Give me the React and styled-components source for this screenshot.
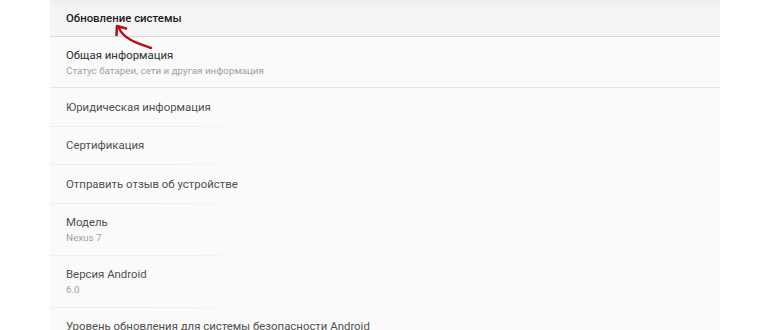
import React from 'react';
import styled, { createGlobalStyle } from 'styled-components';

const GlobalStyle = createGlobalStyle`
  html, body {
    margin: 0;
    padding: 0;
    background: #ffffff;
    font-family: Roboto, "Noto Sans", "Liberation Sans", sans-serif;
  }
`;

const Page = styled.div`
  width: 770px;
  height: 330px;
  overflow: hidden;
  padding-left: 50px;
  box-sizing: border-box;
`;

const Panel = styled.div`
  position: relative;
  width: 670px;
  background: #fafafa;
  display: flex;
  flex-direction: column;
`;

const TopBar = styled.div`
  height: 36px;
  display: flex;
  align-items: center;
  padding-left: 16px;
  background: linear-gradient(#eeeeee, #f4f4f4 30%, #f5f5f5);
  border-bottom: 1px solid #d6d6d6;
  font-size: 11.4px;
  font-weight: 500;
  color: #1c1c1c;
`;

const Row = styled.div`
  height: ${p => (p.$h ? p.$h : p.$sub ? 52 : 38.5)}px;
  display: flex;
  flex-direction: column;
  justify-content: ${p => (p.$sub ? 'flex-start' : 'center')};
  padding-top: ${p => (p.$sub ? 11 : 0)}px;
  padding-left: 16px;
  box-sizing: border-box;
  border-bottom: ${p => (p.$strong ? '1px solid #e4e4e4' : 'none')};
  position: relative;

  ${p => !p.$strong && !p.$last && `
    &::after {
      content: '';
      position: absolute;
      left: 0;
      bottom: 0;
      width: 200px;
      height: 1px;
      background: linear-gradient(90deg, #ededed, #efefef 70%, rgba(239,239,239,0));
    }
  `}
`;

const Title = styled.div`
  font-size: 11.4px;
  line-height: 15px;
  color: ${p => (p.$dark ? '#2e2e2e' : '#505050')};
`;

const Sub = styled.div`
  font-size: 9.8px;
  line-height: 15px;
  color: #a0a0a0;
`;

const Arrow = styled.svg`
  position: absolute;
  left: 60px;
  top: 22px;
  width: 50px;
  height: 30px;
  pointer-events: none;
`;

const rows = [
  { title: 'Общая информация', sub: 'Статус батареи, сети и другая информация', strong: true, dark: true, h: 51 },
  { title: 'Юридическая информация' },
  { title: 'Сертификация' },
  { title: 'Отправить отзыв об устройстве' },
  { title: 'Модель', sub: 'Nexus 7' },
  { title: 'Версия Android', sub: '6.0' },
  { title: 'Уровень обновления для системы безопасности Android', last: true },
];

export default function App() {
  return (
    <>
      <GlobalStyle />
      <Page>
        <Panel>
          <TopBar>Обновление системы</TopBar>
          {rows.map(r => (
            <Row key={r.title} $sub={!!r.sub} $h={r.h} $strong={r.strong} $last={r.last}>
              <Title $dark={r.dark}>{r.title}</Title>
              {r.sub && <Sub>{r.sub}</Sub>}
            </Row>
          ))}
          <Arrow viewBox="0 0 50 30">
            <path d="M41 26 C 30 22, 14 18, 9 6" stroke="#b5121b" strokeWidth="2.4" fill="none" strokeLinecap="round" />
            <path d="M7 4 L 6.5 13 M7 4 L 16 6.5" stroke="#b5121b" strokeWidth="2.6" fill="none" strokeLinecap="round" />
          </Arrow>
        </Panel>
      </Page>
    </>
  );
}
